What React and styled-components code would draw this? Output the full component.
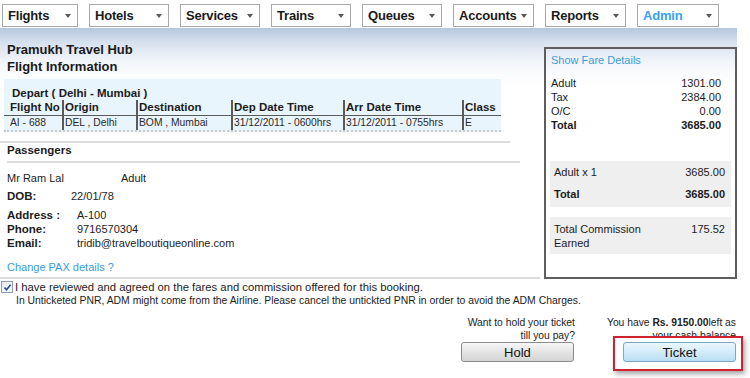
import styled, { createGlobalStyle } from "styled-components";

const navItems = [
  { label: "Flights", w: 76 },
  { label: "Hotels", w: 80 },
  { label: "Services", w: 80 },
  { label: "Trains", w: 80 },
  { label: "Queues", w: 80 },
  { label: "Accounts", w: 81 },
  { label: "Reports", w: 81 },
  { label: "Admin", w: 82, active: true },
];

const columns = [
  { head: "Flight No", value: "AI - 688" },
  { head: "Origin", value: "DEL , Delhi" },
  { head: "Destination", value: "BOM , Mumbai" },
  { head: "Dep Date Time", value: "31/12/2011 - 0600hrs" },
  { head: "Arr Date Time", value: "31/12/2011 - 0755hrs" },
  { head: "Class", value: "E" },
];

const fares = [
  { label: "Adult", value: "1301.00" },
  { label: "Tax", value: "2384.00" },
  { label: "O/C", value: "0.00" },
  { label: "Total", value: "3685.00", bold: true },
];

const App = () => {
  return (
    <Page>
      <GlobalStyle />
      <NavBar>
        {navItems.map((n) => (
          <NavItem key={n.label} $w={n.w} $active={n.active}>
            {n.label}
            <Caret />
          </NavItem>
        ))}
      </NavBar>

      <Band>
        <LeftColumn>
          <Title>
            Pramukh Travel Hub
            <br />
            Flight Information
          </Title>

          <FlightBox>
            <DepartTitle>Depart ( Delhi - Mumbai )</DepartTitle>
            <FlightGrid>
              {columns.map((c, i) => (
                <HeadCell key={c.head} $first={i === 0}>
                  {c.head}
                </HeadCell>
              ))}
              {columns.map((c, i) => (
                <DataCell key={c.head} $first={i === 0}>
                  {c.value}
                </DataCell>
              ))}
            </FlightGrid>
          </FlightBox>

          <Divider $w={510} $mt={9} />

          <SectionHead>Passengers</SectionHead>

          <PaxBlock>
            <NameRow>
              <span className="name">Mr Ram Lal</span>
              <span>Adult</span>
            </NameRow>
            <InfoRow $label={64} $mt={4}>
              <b>DOB:</b>
              <span>22/01/78</span>
            </InfoRow>
            <InfoRow $label={70} $mt={5}>
              <b>Address :</b>
              <span>A-100</span>
              <b>Phone:</b>
              <span>9716570304</span>
              <b>Email:</b>
              <span>tridib@travelboutiqueonline.com</span>
            </InfoRow>
            <Link $mt={10}>Change PAX details ?</Link>
          </PaxBlock>

          <Divider $w={540} $mt={3} />

          <Agreement>
            <CheckLine>
              <CheckBox>
                <svg width="9" height="9" viewBox="0 0 9 9">
                  <path
                    d="M1.5 4.5 L3.5 6.8 L7.6 1.8"
                    fill="none"
                    stroke="#21499a"
                    strokeWidth="1.6"
                  />
                </svg>
              </CheckBox>
              I have reviewed and agreed on the fares and commission offered
              for this booking.
            </CheckLine>
            <NoteLine>
              In Unticketed PNR, ADM might come from the Airline. Please cancel
              the untickted PNR in order to avoid the ADM Charges.
            </NoteLine>
          </Agreement>
        </LeftColumn>

        <FarePanel>
          <Link $mt={0}>Show Fare Details</Link>
          <FareList>
            {fares.map((f) => (
              <FareRow key={f.label} $bold={f.bold}>
                <span>{f.label}</span>
                <span>{f.value}</span>
              </FareRow>
            ))}
          </FareList>
          <GreyBox $mt={29} $gap={8} $pt={4} $pb={6}>
            <FareRow>
              <span>Adult x 1</span>
              <span>3685.00</span>
            </FareRow>
            <FareRow $bold>
              <span>Total</span>
              <span>3685.00</span>
            </FareRow>
          </GreyBox>
          <GreyBox $mt={10} $gap={0} $pt={5} $pb={4}>
            <FareRow>
              <span className="wrap">Total Commission Earned</span>
              <span>175.52</span>
            </FareRow>
          </GreyBox>
        </FarePanel>
      </Band>

      <Actions>
        <ActionGroup>
          <Hint>
            Want to hold your ticket
            <br />
            till you pay?
          </Hint>
          <HoldButton>Hold</HoldButton>
        </ActionGroup>
        <ActionGroup>
          <Hint>
            You have <b>Rs. 9150.00</b>left as
            <br />
            your cash balance
          </Hint>
          <HighlightFrame>
            <TicketButton>Ticket</TicketButton>
          </HighlightFrame>
        </ActionGroup>
      </Actions>
    </Page>
  );
};
export default App;

const GlobalStyle = createGlobalStyle`
  body {
    margin: 0;
    background: #fff;
    font-family: "Liberation Sans", Arial, sans-serif;
    color: #1c1c1c;
  }
`;

const Page = styled.div`
  width: 750px;
  height: 378px;
  overflow: hidden;
`;

const NavBar = styled.div`
  display: flex;
  gap: 11px;
  padding: 4px 0 0 2px;
`;

const NavItem = styled.div`
  box-sizing: border-box;
  width: ${(p) => p.$w}px;
  height: 23px;
  border: 1px solid #a9a9a9;
  background: #fff;
  display: flex;
  align-items: center;
  justify-content: space-between;
  padding: 0 6px 0 5px;
  font-size: 13px;
  font-weight: bold;
  letter-spacing: -0.2px;
  color: ${(p) => (p.$active ? "#3aa0f0" : "#1a1a1a")};
`;

const Caret = styled.span`
  width: 0;
  height: 0;
  border-left: 3px solid transparent;
  border-right: 3px solid transparent;
  border-top: 4px solid #5a5a5a;
`;

const Band = styled.div`
  margin-top: 1px;
  width: 737px;
  display: flex;
  align-items: flex-start;
  background: linear-gradient(
    to bottom,
    #b5c6df 0px,
    #d6e0ee 14px,
    #eef2f8 30px,
    #fbfcfd 46px,
    #fff 60px
  );
`;

const LeftColumn = styled.div`
  width: 540px;
  flex-shrink: 0;
  white-space: nowrap;
`;

const Title = styled.div`
  padding: 13px 0 0 7px;
  font-size: 13px;
  font-weight: bold;
  line-height: 17px;
  color: #1a1a1a;
`;

const FlightBox = styled.div`
  margin: 4px 0 0 4px;
  width: 497px;
  padding-top: 7px;
  background: #e9f5fd;
  border-bottom: 2px dotted #c9c9c9;
`;

const DepartTitle = styled.div`
  padding-left: 8px;
  font-size: 11.5px;
  font-weight: bold;
  line-height: 14px;
`;

const FlightGrid = styled.div`
  display: grid;
  grid-template-columns: 58px 74px 95px 112px 119px 1fr;
`;

const HeadCell = styled.div`
  font-size: 11.5px;
  font-weight: bold;
  line-height: 15px;
  border-bottom: 1px solid #5a5a5a;
  border-left: ${(p) => (p.$first ? "none" : "2px solid #5a5a5a")};
  padding-left: ${(p) => (p.$first ? "6px" : "1px")};
`;

const DataCell = styled.div`
  font-size: 10.3px;
  line-height: 14px;
  color: #2a2a2a;
  border-left: ${(p) => (p.$first ? "none" : "2px solid #5a5a5a")};
  padding-left: ${(p) => (p.$first ? "6px" : "1px")};
`;

const Divider = styled.div`
  width: ${(p) => p.$w}px;
  height: 2px;
  margin-top: ${(p) => p.$mt}px;
  background: #dcdcdc;
`;

const SectionHead = styled.div`
  margin-left: 7px;
  width: 513px;
  padding-bottom: 4px;
  border-bottom: 2px solid #dcdcdc;
  font-size: 11.5px;
  font-weight: bold;
  line-height: 14px;
`;

const PaxBlock = styled.div`
  padding-left: 7px;
  font-size: 11px;
  line-height: 14px;
`;

const NameRow = styled.div`
  display: flex;
  margin-top: 8px;
  .name {
    width: 114px;
  }
`;

const InfoRow = styled.div`
  display: grid;
  grid-template-columns: ${(p) => p.$label}px auto;
  justify-content: start;
  margin-top: ${(p) => p.$mt}px;
  b {
    font-weight: bold;
    font-size: 11.5px;
  }
`;

const Link = styled.div`
  margin-top: ${(p) => p.$mt}px;
  font-size: 11px;
  line-height: 14px;
  color: #3a9bdb;
  cursor: pointer;
`;

const Agreement = styled.div`
  margin-top: 1px;
  line-height: 14px;
`;

const CheckLine = styled.div`
  display: flex;
  align-items: center;
  padding-left: 1px;
  font-size: 11.3px;
`;

const CheckBox = styled.span`
  box-sizing: border-box;
  width: 12px;
  height: 12px;
  margin-right: 2px;
  border: 1px solid #8aa0bf;
  background: linear-gradient(135deg, #e4e8ee, #fff);
  display: flex;
  align-items: center;
  justify-content: center;
`;

const NoteLine = styled.div`
  padding-left: 16px;
  font-size: 10.4px;
`;

const FarePanel = styled.div`
  box-sizing: border-box;
  width: 193px;
  height: 232px;
  margin: 19px 0 0 4px;
  padding: 4px 0 0 5px;
  border: 2px solid #5e5e5e;
  flex-shrink: 0;
`;

const FareList = styled.div`
  margin-top: 9px;
  padding-right: 14px;
`;

const FareRow = styled.div`
  display: flex;
  justify-content: space-between;
  align-items: flex-start;
  font-size: 11px;
  line-height: 14px;
  font-weight: ${(p) => (p.$bold ? "bold" : "normal")};
  .wrap {
    width: 95px;
    white-space: normal;
  }
`;

const GreyBox = styled.div`
  margin: ${(p) => p.$mt}px 4px 0 -1px;
  padding: ${(p) => p.$pt}px 6px ${(p) => p.$pb}px 4px;
  background: #efefef;
  display: flex;
  flex-direction: column;
  gap: ${(p) => p.$gap}px;
`;

const Actions = styled.div`
  width: 736px;
  display: flex;
  justify-content: flex-end;
  gap: 32px;
  margin-top: 8px;
`;

const ActionGroup = styled.div`
  display: flex;
  flex-direction: column;
  align-items: flex-end;
`;

const Hint = styled.div`
  font-size: 10.3px;
  line-height: 13px;
  text-align: right;
  color: #222;
  white-space: nowrap;
`;

const HoldButton = styled.button`
  box-sizing: border-box;
  width: 113px;
  height: 20px;
  margin-right: 1px;
  padding: 0;
  font-family: inherit;
  font-size: 13px;
  color: #111;
  border: 1px solid #8c8c8c;
  border-radius: 3px;
  background: linear-gradient(to bottom, #f8f8f8, #e4e4e4 50%, #d4d4d4);
`;

const HighlightFrame = styled.div`
  position: relative;
  z-index: 1;
  display: flex;
  &::before {
    content: "";
    position: absolute;
    top: -6px;
    left: -10px;
    right: -7px;
    bottom: -9px;
    border: 2px solid #cf2131;
    background: #fff;
    box-shadow: 2px 3px 5px rgba(0, 0, 0, 0.35);
    z-index: -1;
  }
`;

const TicketButton = styled(HoldButton)`
  margin-right: 0;
  border-color: #7ca6c6;
  background: linear-gradient(to bottom, #eaf6fd, #d4ecfa 50%, #b8ddf5);
`;
